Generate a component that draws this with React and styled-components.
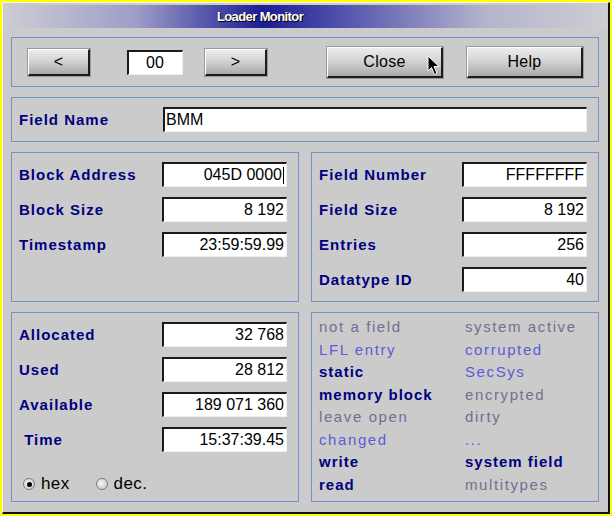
import React from 'react'
import styled, {createGlobalStyle} from 'styled-components'

const NAVY = '#000080'
const PANEL_LINE = '#7391cf'

const Global = createGlobalStyle`
    html, body {
        margin: 0;
        padding: 0;
        background: #ffff00;
    }
    body {
        font-family: "Liberation Sans", Arial, sans-serif;
        width: 612px;
        height: 516px;
        overflow: hidden;
    }
`

const Window = styled.div`
    margin: 2px 0 0 2px;
    width: 605px;
    height: 509px;
    background: #cbcbcb;
    border-top: 1px solid #f4f4f4;
    border-left: 1px solid #f4f4f4;
    border-right: 2px solid #111;
    border-bottom: 2px solid #111;
    display: flex;
    flex-direction: column;
`

const TitleBar = styled.div`
    margin: 2px 2px 0 1px;
    height: 23px;
    display: flex;
    align-items: center;
    justify-content: center;
    padding-right: 90px;
    background: linear-gradient(to right, #cdcdd3 0%, #9d9dc8 22%, #1c1c94 43%, #5a5ab0 58%, #b4b4cc 80%, #cdcdd3 100%);
    color: #ffffee;
    font-weight: bold;
    font-size: 13px;
    letter-spacing: -0.6px;
    text-shadow: 1px 1px 0 #000;
`

const Content = styled.div`
    flex: 1;
    display: flex;
    flex-direction: column;
    gap: 10px;
    padding: 9px 9px 0 8px;
`

const Panel = styled.div`
    border: 1px solid ${PANEL_LINE};
    height: ${p => p.$h}px;
    box-sizing: border-box;
`

const NavPanel = styled(Panel)`
    display: flex;
    align-items: center;
    padding: 0 0 0 16px;
`

const NamePanel = styled(Panel)`
    display: flex;
    align-items: center;
    padding: 0 11px 1px 7px;
`

const Columns = styled.div`
    display: grid;
    grid-template-columns: 288px 288px;
    column-gap: 12px;
`

const FieldGrid = styled(Panel)`
    display: grid;
    grid-template-columns: 1fr 125px;
    grid-auto-rows: 25px;
    row-gap: 10px;
    align-content: start;
    align-items: center;
    padding: 9px 11px 0 7px;
`

const LowerLeft = styled(Panel)`
    display: flex;
    flex-direction: column;
`

const Label = styled.div`
    color: ${NAVY};
    font-weight: bold;
    font-size: 15px;
    letter-spacing: 1px;
    white-space: pre;
    width: ${p => p.$w ? `${p.$w}px` : 'auto'};
`

const Input = styled.div`
    box-sizing: border-box;
    height: 25px;
    width: ${p => p.$w ? `${p.$w}px` : 'auto'};
    flex: ${p => p.$grow ? 1 : 'none'};
    margin-left: ${p => p.$ml || 0}px;
    background: #fff;
    border-top: 2px solid #1a1a1a;
    border-left: 2px solid #1a1a1a;
    border-right: 1px solid #f0f0f0;
    border-bottom: 1px solid #f0f0f0;
    display: flex;
    align-items: center;
    justify-content: ${p => p.$align || 'flex-end'};
    padding: 0 2px 0 1px;
    font-size: 16px;
    color: #000;
    white-space: pre;
`

const Caret = styled.span`
    display: inline-block;
    width: 1px;
    height: 17px;
    background: #000;
    margin-left: 1px;
`

const Button = styled.div`
    position: relative;
    box-sizing: border-box;
    width: ${p => p.$w}px;
    height: ${p => p.$h}px;
    margin-left: ${p => p.$ml || 0}px;
    background: linear-gradient(to bottom, #ececec 0%, #d4d4d4 45%, #a9a9a9 100%);
    border-top: 1px solid #fff;
    border-left: 1px solid #fff;
    border-right: 2px solid #1c1c1c;
    border-bottom: 2px solid #1c1c1c;
    outline: 1px solid #9a9a9a;
    display: flex;
    align-items: center;
    justify-content: center;
    font-size: 16px;
    letter-spacing: 0.3px;
    color: #000;
`

const Cursor = styled.svg`
    position: absolute;
    left: 99px;
    top: 7px;
`

const RadioRow = styled.div`
    display: flex;
    align-items: center;
    margin: auto 0 7px 11px;
`

const Radio = styled.div`
    display: flex;
    align-items: center;
    font-size: 17px;
    letter-spacing: 0.4px;
    color: #000;
    margin-right: ${p => p.$mr || 0}px;
`

const Dot = styled.span`
    box-sizing: border-box;
    width: 12px;
    height: 12px;
    border-radius: 50%;
    border: 1px solid #7a7a7a;
    background: radial-gradient(circle at 40% 40%, #f4f4f4, #c4c4c4);
    margin-right: 6px;
    display: flex;
    align-items: center;
    justify-content: center;
    &::after {
        content: '';
        width: 5px;
        height: 5px;
        border-radius: 50%;
        background: ${p => p.$on ? '#000' : 'transparent'};
    }
`

const StatusGrid = styled(Panel)`
    display: grid;
    grid-template-columns: 146px 1fr;
    grid-auto-rows: 22.5px;
    align-content: start;
    padding: 3px 0 0 7px;
`

const Status = styled.div`
    font-size: 15px;
    line-height: 22.5px;
    white-space: pre;
    color: ${p => p.$kind === 'on' ? NAVY : p.$kind === 'blue' ? '#5b5bd6' : '#70708e'};
    font-weight: ${p => p.$kind === 'on' ? 'bold' : 'normal'};
    letter-spacing: ${p => p.$kind === 'on' ? '1px' : '1.6px'};
`

const upper = [
    ['Block Address', '045D 0000', true],
    ['Block Size', '8 192'],
    ['Timestamp', '23:59:59.99'],
]

const upperRight = [
    ['Field Number', 'FFFFFFFF'],
    ['Field Size', '8 192'],
    ['Entries', '256'],
    ['Datatype ID', '40'],
]

const lower = [
    ['Allocated', '32 768'],
    ['Used', '28 812'],
    ['Available', '189 071 360'],
    [' Time', '15:37:39.45'],
]

const flags = [
    ['not a field', 'dim'], ['system active', 'dim'],
    ['LFL entry', 'blue'], ['corrupted', 'blue'],
    ['static', 'on'], ['SecSys', 'blue'],
    ['memory block', 'on'], ['encrypted', 'dim'],
    ['leave open', 'dim'], ['dirty', 'dim'],
    ['changed', 'blue'], ['...', 'blue'],
    ['write', 'on'], ['system field', 'on'],
    ['read', 'on'], ['multitypes', 'dim'],
]

function Rows({items}) {
    return items.map(([label, value, caret]) => (
        <React.Fragment key={label}>
            <Label>{label}</Label>
            <Input>{value}{caret && <Caret />}</Input>
        </React.Fragment>
    ))
}

export default function App() {
    return <>
        <Global />
        <Window>
            <TitleBar>Loader Monitor</TitleBar>
            <Content>
                <NavPanel $h={50}>
                    <Button $w={62} $h={27}>&lt;</Button>
                    <Input $w={56} $ml={37} $align='center'>00</Input>
                    <Button $w={62} $h={27} $ml={22}>&gt;</Button>
                    <Button $w={116} $h={31} $ml={60}>
                        Close
                        <Cursor width='13' height='21' viewBox='0 0 13 21'>
                            <path d='M1 1 L1 16 L4.5 12.5 L7.5 19.5 L10 18.5 L7 11.5 L12 11.5 Z'
                                fill='#000' stroke='#fff' strokeWidth='1' />
                        </Cursor>
                    </Button>
                    <Button $w={116} $h={31} $ml={24}>Help</Button>
                </NavPanel>

                <NamePanel $h={45}>
                    <Label $w={144}>Field Name</Label>
                    <Input $grow $align='flex-start'>BMM</Input>
                </NamePanel>

                <Columns>
                    <FieldGrid $h={150}><Rows items={upper} /></FieldGrid>
                    <FieldGrid $h={150}><Rows items={upperRight} /></FieldGrid>
                </Columns>

                <Columns>
                    <LowerLeft $h={190}>
                        <FieldGrid as='div' style={{border: 'none'}}>
                            <Rows items={lower} />
                        </FieldGrid>
                        <RadioRow>
                            <Radio $mr={26}><Dot $on />hex</Radio>
                            <Radio><Dot />dec.</Radio>
                        </RadioRow>
                    </LowerLeft>
                    <StatusGrid $h={190}>
                        {flags.map(([text, kind]) => (
                            <Status key={text} $kind={kind}>{text}</Status>
                        ))}
                    </StatusGrid>
                </Columns>
            </Content>
        </Window>
    </>
}
